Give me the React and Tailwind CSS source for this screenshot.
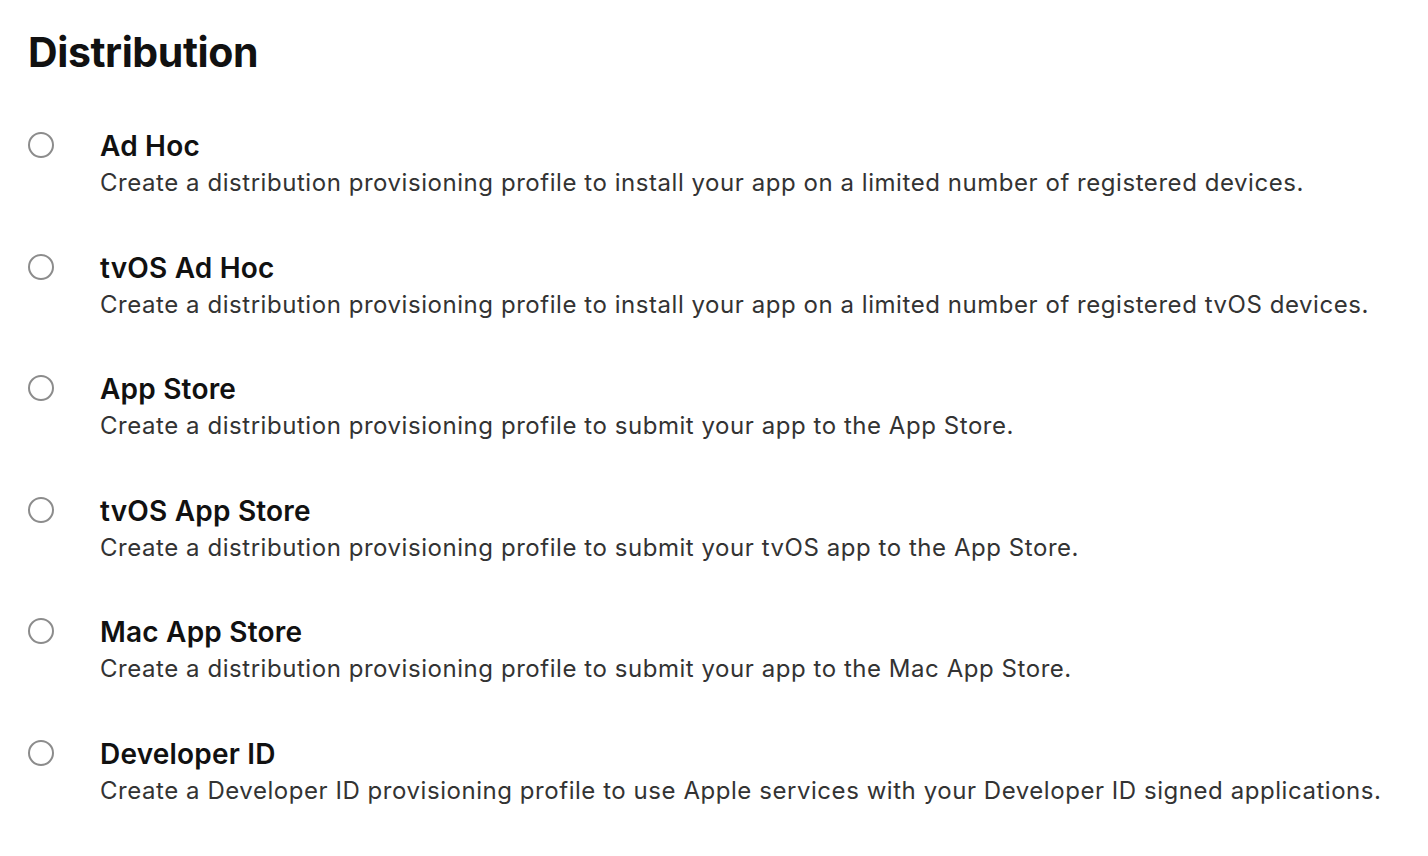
import React from 'react';

const options = [
  { title: 'Ad Hoc', desc: 'Create a distribution provisioning profile to install your app on a limited number of registered devices.' },
  { title: 'tvOS Ad Hoc', desc: 'Create a distribution provisioning profile to install your app on a limited number of registered tvOS devices.' },
  { title: 'App Store', desc: 'Create a distribution provisioning profile to submit your app to the App Store.' },
  { title: 'tvOS App Store', desc: 'Create a distribution provisioning profile to submit your tvOS app to the App Store.' },
  { title: 'Mac App Store', desc: 'Create a distribution provisioning profile to submit your app to the Mac App Store.' },
  { title: 'Developer ID', desc: 'Create a Developer ID provisioning profile to use Apple services with your Developer ID signed applications.' },
];

export default function App() {
  return (
    <div className="min-h-screen bg-white px-7 pt-[26px] font-['Inter',sans-serif] antialiased">
      <h1 className="text-[41px] leading-[52px] font-bold text-[#111] tracking-[-0.01em]">Distribution</h1>

      <div className="mt-[50px] flex flex-col">
        {options.map(({ title, desc }) => (
          <label key={title} className="flex items-start h-[121.6px]">
            <span className="mt-[4px] w-[26px] h-[26px] rounded-full border-2 border-[#8c8c8c] bg-white flex-shrink-0" />
            <span className="ml-[46px] flex flex-col">
              <span className="text-[28px] leading-[36px] font-semibold text-[#111] tracking-[0.2px]">{title}</span>
              <span className="text-[24px] leading-[38px] text-[#333] tracking-[0.55px]">{desc}</span>
            </span>
          </label>
        ))}
      </div>
    </div>
  );
}
